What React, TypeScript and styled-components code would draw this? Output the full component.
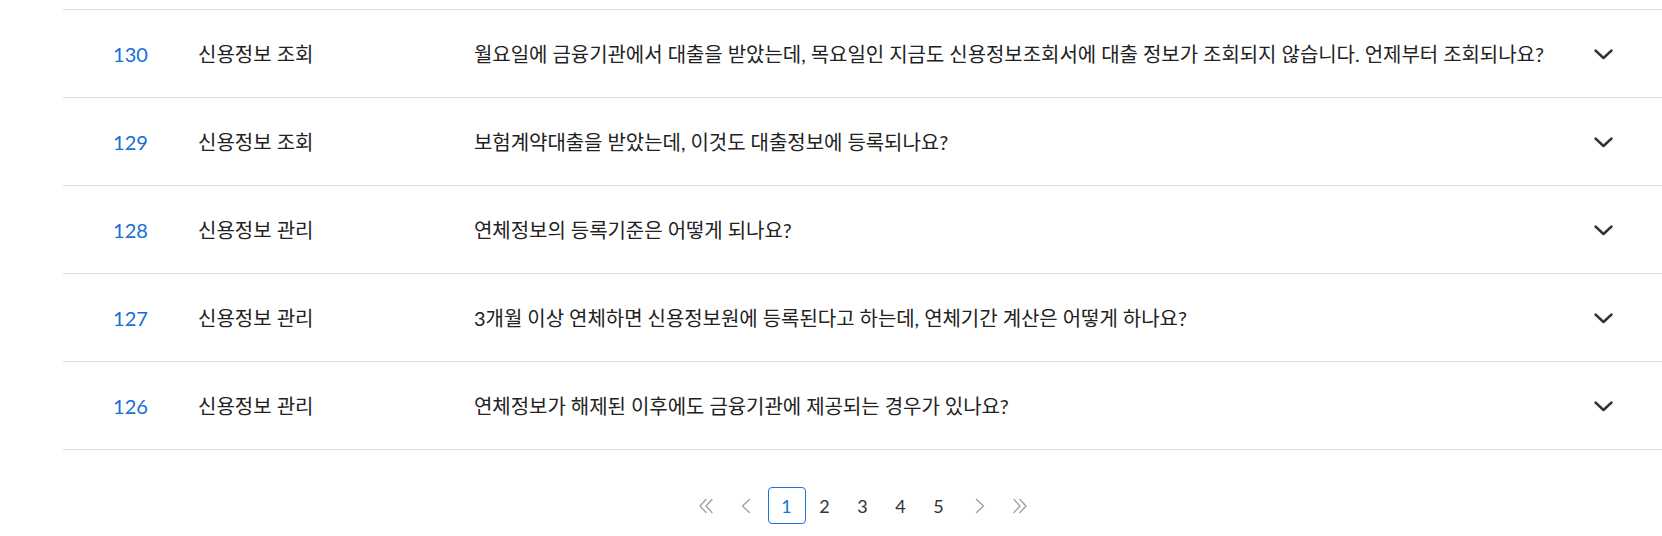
import React from "react"
import styled, { createGlobalStyle } from "styled-components"

interface Faq {
  no: number
  category: string
  question: string
}

const faqs: Faq[] = [
  {
    no: 130,
    category: "신용정보 조회",
    question:
      "월요일에 금융기관에서 대출을 받았는데, 목요일인 지금도 신용정보조회서에 대출 정보가 조회되지 않습니다. 언제부터 조회되나요?",
  },
  { no: 129, category: "신용정보 조회", question: "보험계약대출을 받았는데, 이것도 대출정보에 등록되나요?" },
  { no: 128, category: "신용정보 관리", question: "연체정보의 등록기준은 어떻게 되나요?" },
  {
    no: 127,
    category: "신용정보 관리",
    question: "3개월 이상 연체하면 신용정보원에 등록된다고 하는데, 연체기간 계산은 어떻게 하나요?",
  },
  { no: 126, category: "신용정보 관리", question: "연체정보가 해제된 이후에도 금융기관에 제공되는 경우가 있나요?" },
]

const GlobalStyle = createGlobalStyle`
  html, body {
    margin: 0;
    padding: 0;
    background: #ffffff;
    overflow: hidden;
  }
  body {
    font-family: Lato, "Noto Sans CJK KR", sans-serif;
    color: #222222;
  }
`

const Container = styled.div`
  margin-left: 63px;
  padding-top: 9px;
  width: calc(100% - 63px);
`

const List = styled.ul`
  list-style: none;
  margin: 0;
  padding: 0;
  border-top: 1px solid #dedede;
`

const Row = styled.li`
  display: grid;
  grid-template-columns: 135px 276px 1fr 68px;
  align-items: center;
  height: 87px;
  border-bottom: 1px solid #dedede;
  font-size: 20px;
`

const No = styled.span`
  text-align: center;
  color: #1470d6;
`

const Category = styled.span`
  color: #222222;
`

const Question = styled.span`
  color: #222222;
  white-space: nowrap;
  letter-spacing: -0.05px;
`

const Toggle = styled.button`
  display: flex;
  align-items: center;
  justify-content: flex-start;
  padding: 2px 0 0 0;
  border: 0;
  background: none;
  color: #333333;
  cursor: pointer;
`

const Pagination = styled.nav`
  display: flex;
  justify-content: center;
  align-items: center;
  margin-top: 37px;
`

const PageButton = styled.button<{ $active?: boolean; $arrow?: boolean }>`
  width: ${(p) => (p.$arrow ? 40 : 38)}px;
  height: 37px;
  box-sizing: border-box;
  display: flex;
  align-items: center;
  justify-content: center;
  padding: 0;
  border: 1px solid ${(p) => (p.$active ? "#1a73d9" : "transparent")};
  border-radius: 4px;
  background: none;
  font-family: Lato, "Noto Sans CJK KR", sans-serif;
  font-size: 18px;
  color: ${(p) => (p.$active ? "#1a73d9" : p.$arrow ? "#9e9e9e" : "#333333")};
  cursor: pointer;
`

const Pages = styled.div`
  display: flex;
  margin: 0 2px;
`

const Chevron = () => (
  <svg width="19" height="11" viewBox="0 0 19 11" fill="none">
    <polyline
      points="1.5,1.5 9.5,9 17.5,1.5"
      stroke="currentColor"
      strokeWidth="2.4"
      strokeLinecap="round"
      strokeLinejoin="round"
    />
  </svg>
)

const Arrow = ({ dir, double }: { dir: "left" | "right"; double?: boolean }) => {
  const flip = dir === "right" ? "scale(-1,1) translate(-16,0)" : undefined
  return (
    <svg width="16" height="16" viewBox="0 0 16 16" fill="none">
      <g transform={flip} stroke="currentColor" strokeWidth="1.3" strokeLinecap="round" strokeLinejoin="round">
        {double ? (
          <>
            <polyline points="8,1.5 2,8 8,14.5" />
            <polyline points="14,1.5 8,8 14,14.5" />
          </>
        ) : (
          <polyline points="11.5,1.5 4.5,8 11.5,14.5" />
        )}
      </g>
    </svg>
  )
}

export default function App() {
  return (
    <>
      <GlobalStyle />
      <Container>
        <List>
          {faqs.map((f) => (
            <Row key={f.no}>
              <No>{f.no}</No>
              <Category>{f.category}</Category>
              <Question>{f.question}</Question>
              <Toggle aria-label="펼치기">
                <Chevron />
              </Toggle>
            </Row>
          ))}
        </List>
        <Pagination>
          <PageButton $arrow aria-label="처음">
            <Arrow dir="left" double />
          </PageButton>
          <PageButton $arrow aria-label="이전">
            <Arrow dir="left" />
          </PageButton>
          <Pages>
            {[1, 2, 3, 4, 5].map((n) => (
              <PageButton key={n} $active={n === 1}>
                {n}
              </PageButton>
            ))}
          </Pages>
          <PageButton $arrow aria-label="다음">
            <Arrow dir="right" />
          </PageButton>
          <PageButton $arrow aria-label="마지막">
            <Arrow dir="right" double />
          </PageButton>
        </Pagination>
      </Container>
    </>
  )
}
